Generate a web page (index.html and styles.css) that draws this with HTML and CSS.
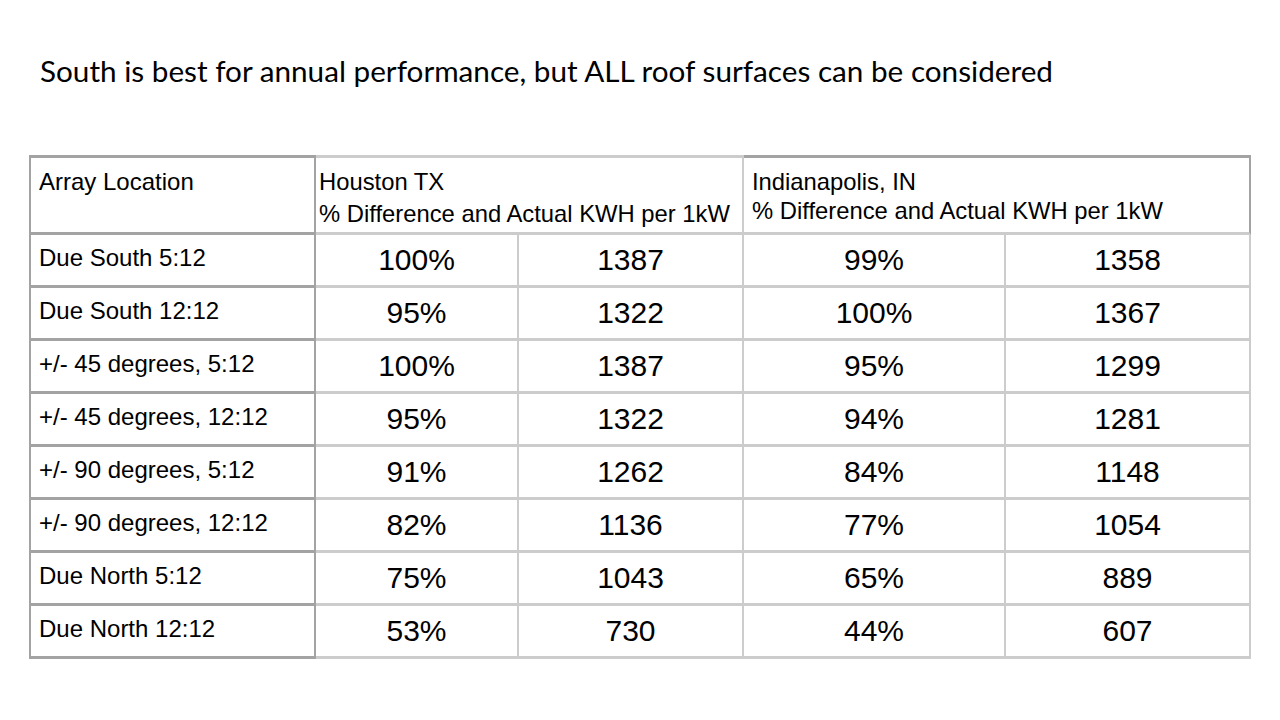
FILE: index.html
```html
<!DOCTYPE html>
<html>
<head>
<meta charset="utf-8">
<link rel="stylesheet" href="styles.css">
</head>
<body>
<div class="slide">
  <h1 class="title">South is best for annual performance, but ALL roof surfaces can be considered</h1>
  <div class="grid">
    <div class="cell head lab">Array Location</div>
    <div class="cell head city hou"><div>Houston TX</div><div class="sub">% Difference and Actual KWH per 1kW</div></div>
    <div class="cell head city ind"><div>Indianapolis, IN</div><div class="sub">% Difference and Actual KWH per 1kW</div></div>

    <div class="cell lab">Due South 5:12</div><div class="cell num">100%</div><div class="cell num">1387</div><div class="cell num">99%</div><div class="cell num">1358</div>
    <div class="cell lab">Due South 12:12</div><div class="cell num">95%</div><div class="cell num">1322</div><div class="cell num">100%</div><div class="cell num">1367</div>
    <div class="cell lab">+/- 45 degrees, 5:12</div><div class="cell num">100%</div><div class="cell num">1387</div><div class="cell num">95%</div><div class="cell num">1299</div>
    <div class="cell lab">+/- 45 degrees, 12:12</div><div class="cell num">95%</div><div class="cell num">1322</div><div class="cell num">94%</div><div class="cell num">1281</div>
    <div class="cell lab">+/- 90 degrees, 5:12</div><div class="cell num">91%</div><div class="cell num">1262</div><div class="cell num">84%</div><div class="cell num">1148</div>
    <div class="cell lab">+/- 90 degrees, 12:12</div><div class="cell num">82%</div><div class="cell num">1136</div><div class="cell num">77%</div><div class="cell num">1054</div>
    <div class="cell lab">Due North 5:12</div><div class="cell num">75%</div><div class="cell num">1043</div><div class="cell num">65%</div><div class="cell num">889</div>
    <div class="cell lab">Due North 12:12</div><div class="cell num">53%</div><div class="cell num">730</div><div class="cell num">44%</div><div class="cell num">607</div>
  </div>
</div>
</body>
</html>
```
FILE: styles.css
```css
html, body {
  margin: 0;
  padding: 0;
  background: #ffffff;
}
.slide {
  width: 1280px;
  height: 720px;
  padding: 53px 0 0 29px;
  box-sizing: border-box;
  color: #000;
}
.title {
  margin: 0 0 66px 11px;
  font-family: Lato, "Open Sans", sans-serif;
  font-weight: 400;
  font-size: 29.7px;
  line-height: 36px;
  white-space: nowrap;
}
.grid {
  display: grid;
  grid-template-columns: 285px 203px 225px 262px 245px;
  grid-template-rows: 80px repeat(8, 53px);
  width: max-content;
  border-left: 2px solid #a3a3a3;
  font-family: "Liberation Sans", Arial, sans-serif;
  box-sizing: content-box;
}
.cell {
  box-sizing: border-box;
  border-right: 2px solid #cccccc;
  border-bottom: 3px solid #cccccc;
  min-width: 0;
  white-space: nowrap;
}
.head {
  border-top: 3px solid #cccccc;
  font-size: 23.8px;
  padding-top: 10px;
}
.city {
  grid-column: span 2;
}
.hou {
  padding-left: 3px;
}
.hou .sub { margin-top: 4px; }
.ind {
  padding-left: 8px;
  border-top-color: #a3a3a3;
  border-right-color: #a3a3a3;
}
.ind .sub { margin-top: 1px; }
.lab {
  font-size: 24px;
  padding-left: 8px;
  border-right-color: #a3a3a3;
  border-bottom-color: #a3a3a3;
}
.cell.lab:not(.head) {
  padding-top: 9px;
}
.head.lab {
  border-top-color: #a3a3a3;
}
.num {
  font-size: 30px;
  text-align: center;
  padding-top: 8px;
}
```
